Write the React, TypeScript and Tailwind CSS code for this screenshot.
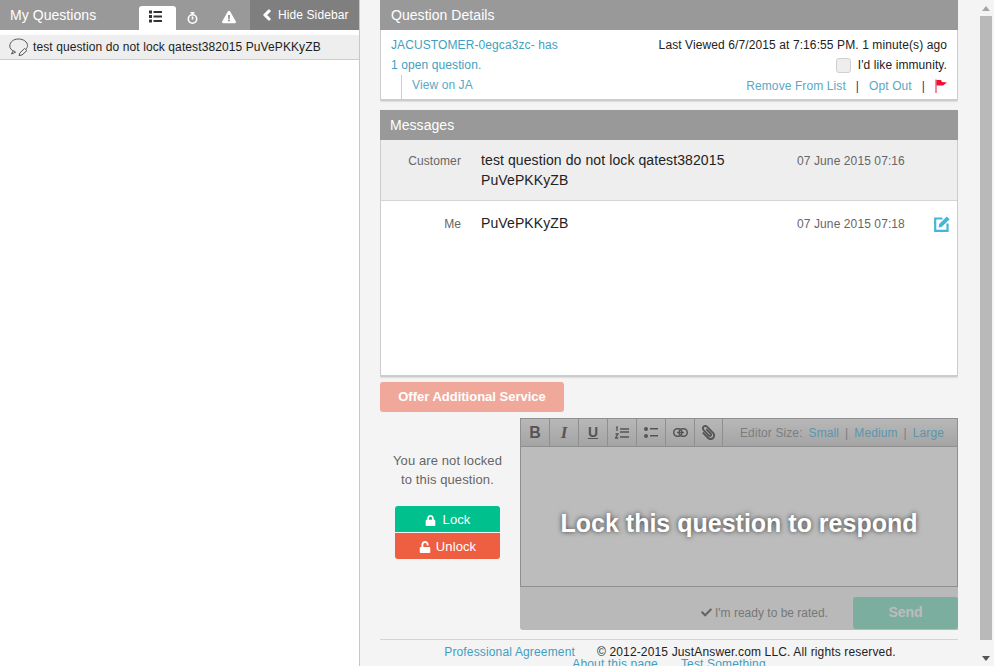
import { FaCheck, FaChevronLeft, FaExclamationTriangle, FaLock, FaPaperclip, FaUnlock } from "react-icons/fa";
import type { ReactNode } from "react";

const Sep = () => <span className="text-[#4b2a6b]">|</span>;

const ToolButton = ({ children, last }: { children: ReactNode; last?: boolean }) => (
  <div className={`flex h-[27px] items-center justify-center border-r border-[#8f8f8f] text-[#555] ${last ? "w-[28px]" : "w-[29px]"}`}>
    {children}
  </div>
);

const Sidebar = () => (
  <aside className="flex h-full w-[360px] shrink-0 flex-col border-r border-[#c8c8c8] bg-white">
    <div className="flex h-[30px] items-end bg-[#999999] pl-[10px]">
      <h2 className="w-[129px] self-center text-[14px] tracking-[0.05px] text-white">My Questions</h2>
      <div className="flex h-6 w-[37px] items-center justify-center rounded-t-[3px] bg-white pb-[3px] pr-[5px]">
        <svg width="13" height="13" viewBox="0 0 13 13" fill="#333">
          <path d="M0 0.5 H3 V3.5 H0 Z M0 5 H3 V8 H0 Z M0 9.5 H3 V12.5 H0 Z M4.5 1 H13 V3 H4.5 Z M4.5 5.5 H13 V7.5 H4.5 Z M4.5 10 H13 V12 H4.5 Z" />
        </svg>
      </div>
      <div className="flex h-6 w-[32px] items-center justify-center pb-[1px] text-white">
        <svg width="11" height="12" viewBox="0 0 11 12" fill="none" stroke="white" strokeWidth="1.6">
          <circle cx="5.5" cy="7" r="4.2" />
          <path d="M5.5 4.5 V7.5 M3.5 0.8 H7.5 M5.5 1 V2.5" />
        </svg>
      </div>
      <div className="flex h-6 w-[42px] items-center justify-center pb-[2px] text-white">
        <FaExclamationTriangle size={14} />
      </div>
      <div className="flex h-[30px] flex-1 items-center gap-[5px] bg-[#7f7f7f] pl-[11px] text-[12px] text-white">
        <FaChevronLeft size={12} stroke="currentColor" strokeWidth={50} />
        Hide Sidebar
      </div>
    </div>
    <div className="mt-[5px] flex h-[25px] items-center gap-[3px] border-b border-[#cccccc] bg-[#eeeeee] pl-[9px] text-[12px] text-[#222]">
      <svg width="21" height="18" viewBox="0 0 21 18" fill="none" stroke="#555" strokeWidth="1">
        <path d="M6 13.5 C2.5 12.5 0.8 10.5 0.8 8 C0.8 4 4.5 1 9.5 1 C14.5 1 18.5 4 18.5 7.5 C18.5 9 18 10 17 11" />
        <path d="M4 13 L2.5 16 L7 14" />
        <path d="M15.5 10.5 L18 12.5 L13 17 L10 17.5 L10.8 15 Z" fill="#eeeeee" />
      </svg>
      test question do not lock qatest382015 PuVePKKyZB
    </div>
  </aside>
);

const QuestionDetails = () => (
  <section className="h-[100px] border border-t-0 border-[#cccccc] bg-white shadow-[0_1px_2px_rgba(0,0,0,0.25)]">
    <h3 className="-mx-px flex h-[30px] items-center bg-[#999999] pl-[11px] text-[14px] tracking-[0.05px] text-white">Question Details</h3>
    <div className="flex justify-between text-[12px] leading-[20px]">
      <div className="pl-[10px] text-[#3f9fc0]">
        <p className="mt-[5px]">JACUSTOMER-0egca3zc- has</p>
        <p>1 open question.</p>
        <p className="ml-[10px] h-[25px] border-l border-[#cccccc] pl-[10px] text-[#5aa7c6]">View on JA</p>
      </div>
      <div className="flex flex-col items-end pr-[10px] text-[#222]">
        <p className="mt-[5px]">Last Viewed 6/7/2015 at 7:16:55 PM. 1 minute(s) ago</p>
        <label className="flex h-[20px] items-center gap-[7px]">
          <span className="h-[15px] w-[15px] rounded-[3px] border border-[#d0d0d0] bg-[#eeeeee]" />
          I'd like immunity.
        </label>
        <div className="flex h-[22px] items-center gap-[10px] text-[#5aa7c6]">
          <span>Remove From List</span>
          <Sep />
          <span>Opt Out</span>
          <Sep />
          <svg width="12" height="14" viewBox="0 0 12 14">
            <path d="M1 0.5 V14" stroke="#ee1133" strokeWidth="1" />
            <path d="M1.5 1 L6 1 L7 3 L12 3.5 L8 6.5 L1.5 6.5 Z" fill="#ee1133" />
          </svg>
        </div>
      </div>
    </div>
  </section>
);

const Messages = () => (
  <section className="mt-[10px] h-[266px] border border-[#cccccc] border-t-0 bg-white shadow-[0_1px_2px_rgba(0,0,0,0.25)]">
    <h3 className="-mx-px flex h-[30px] items-center bg-[#999999] pl-[10px] text-[14px] tracking-[0.05px] text-white">Messages</h3>
    <div className="flex h-[61px] border-b border-[#d4d4d4] bg-[#eeeeee] pt-[10px]">
      <div className="w-[80px] pt-px text-right text-[12px] leading-[20px] text-[#666]">Customer</div>
      <div className="ml-[20px] w-[316px] text-[14px] leading-[20px] text-[#222]">
        test question do not lock qatest382015
        <br />
        PuVePKKyZB
      </div>
      <div className="pt-px text-[12px] leading-[20px] text-[#666]">07 June 2015 07:16</div>
    </div>
    <div className="flex pt-[12px]">
      <div className="w-[80px] pt-px text-right text-[12px] leading-[20px] text-[#666]">Me</div>
      <div className="ml-[20px] w-[316px] text-[14px] leading-[20px] text-[#222]">PuVePKKyZB</div>
      <div className="pt-px text-[12px] leading-[20px] text-[#666]">07 June 2015 07:18</div>
      <svg width="16" height="16" viewBox="0 0 16 16" className="ml-[29px] mt-[3px]">
        <path d="M8.5 2.5 H1.2 V14.8 H13.5 V7.5" fill="none" stroke="#45b5d8" strokeWidth="2.2" />
        <path d="M12.8 0.5 L15.6 3.2 L8 10.8 L4.6 11.6 L5.2 8 Z" fill="#45b5d8" />
      </svg>
    </div>
  </section>
);

const LockPanel = () => (
  <div className="flex w-[140px] shrink-0 flex-col items-center pr-[5px] pt-[33px]">
    <p className="text-center text-[13px] leading-[19px] text-[#666]">
      You are not locked
      <br />
      to this question.
    </p>
    <button className="mt-[17px] flex h-[26px] w-[105px] items-center justify-center gap-[7px] rounded-t-[3px] bg-[#00c08e] pt-[2px] text-[13px] text-white">
      <FaLock size={11} />
      Lock
    </button>
    <button className="mt-px flex h-[26px] w-[105px] items-center justify-center gap-[5px] rounded-b-[3px] bg-[#ee5e41] pt-[2px] text-[13px] text-white">
      <FaUnlock size={12} />
      Unlock
    </button>
  </div>
);

const Editor = () => (
  <div className="relative flex-1">
    <div className="flex h-[28px] items-center border border-b-0 border-[#8f8f8f] bg-gradient-to-b from-[#b8b8b8] to-[#a4a4a4]">
      <ToolButton><span className="text-[16px] font-bold">B</span></ToolButton>
      <ToolButton><span className="font-['Liberation_Serif'] text-[17px] font-bold italic">I</span></ToolButton>
      <ToolButton><span className="text-[14px] font-bold underline">U</span></ToolButton>
      <ToolButton>
        <svg width="14" height="13" viewBox="0 0 14 13" fill="none" stroke="#555" strokeWidth="1.3">
          <path d="M5 3 H14 M5 6 H14 M5 11 H14 M1 1.5 L2 1 V5 M0.5 8 H3 L0.5 12 H3.2" />
        </svg>
      </ToolButton>
      <ToolButton>
        <svg width="14" height="11" viewBox="0 0 14 11" fill="#555">
          <circle cx="2" cy="2" r="2" />
          <circle cx="2" cy="9" r="2" />
          <path d="M6 1 H14 V2.5 H6 Z M6 8 H14 V9.5 H6 Z" />
        </svg>
      </ToolButton>
      <ToolButton>
        <svg width="15" height="9" viewBox="0 0 15 9" fill="none" stroke="#555" strokeWidth="1.5">
          <rect x="0.8" y="0.8" width="8" height="7.4" rx="3.5" />
          <rect x="6.2" y="0.8" width="8" height="7.4" rx="3.5" />
          <path d="M4 4.5 H11" />
        </svg>
      </ToolButton>
      <ToolButton last><FaPaperclip size={15} className="-scale-x-100" /></ToolButton>
      <div className="ml-auto flex items-center pr-[13px] text-[12px] text-[#7d7d7d]">
        <span className="mr-[6px]">Editor Size:</span>
        <span className="text-[#5c96ad]">Small</span>
        <span className="mx-[6px]">|</span>
        <span className="text-[#5c96ad]">Medium</span>
        <span className="mx-[6px]">|</span>
        <span className="text-[#5c96ad]">Large</span>
      </div>
    </div>
    <div className="flex h-[141px] items-center justify-center border border-[#8f8f8f] bg-[#bcbcbc] pt-[15px] text-[25px] font-bold tracking-normal text-white [text-shadow:0_0_5px_rgba(0,0,0,0.7)]">
      Lock this question to respond
    </div>
    <div className="flex h-[43px] justify-end rounded-bl-[3px] bg-[#b9b9b9]">
      <div className="mt-[8px] flex items-center self-center">
        <FaCheck size={11} className="mr-[3px] text-[#666]" />
        <span className="mr-[25px] text-[12px] tracking-normal text-[#777]">I'm ready to be rated.</span>
      </div>
      <button className="mt-[10px] h-[32px] w-[105px] self-start rounded-[3px] bg-[#7cae9f] pb-[2px] text-[14px] font-bold tracking-normal text-[#bcbcbc]">Send</button>
    </div>
  </div>
);

const Footer = () => (
  <footer className="mt-[9px] border-t border-[#d4d4d4] pt-[6px] text-center text-[12px] leading-[12px] tracking-[0.15px]">
    <p className="pl-[2px]">
      <span className="text-[#3f9fc0]">Professional Agreement</span>
      <span className="ml-[22px] text-[#222]">© 2012-2015 JustAnswer.com LLC. All rights reserved.</span>
    </p>
    <p className="text-[#3f9fc0]">
      <span>About this page</span>
      <span className="ml-[23px]">Test Something</span>
    </p>
  </footer>
);

const Scrollbar = () => (
  <div className="flex w-[17px] shrink-0 flex-col items-center bg-[#f4f4f4] pt-[6px]">
    <div className="h-0 w-0 border-x-[4px] border-b-[5px] border-x-transparent border-b-[#a6a6a6]" />
    <div className="mt-[5px] h-[624px] w-[12px] bg-[#b9b9b9]" />
    <div className="mt-[16px] h-0 w-0 border-x-[4px] border-t-[5px] border-x-transparent border-t-[#555]" />
  </div>
);

const App = () => (
  <div className="flex h-[666px] w-[994px] overflow-hidden bg-[#f4f4f4] font-['Liberation_Sans',Arial,sans-serif] tracking-[0.1px]">
    <Sidebar />
    <main className="ml-[20px] h-full w-[578px] shrink-0 overflow-hidden">
      <QuestionDetails />
      <Messages />
      <button className="mt-[6px] block h-[30px] w-[184px] rounded-[3px] bg-[#f0a89b] text-[13px] font-bold tracking-normal text-white">
        Offer Additional Service
      </button>
      <div className="mt-[6px] flex">
        <LockPanel />
        <Editor />
      </div>
      <Footer />
    </main>
    <div className="ml-[19px]">
      <Scrollbar />
    </div>
  </div>
);

export default App;
